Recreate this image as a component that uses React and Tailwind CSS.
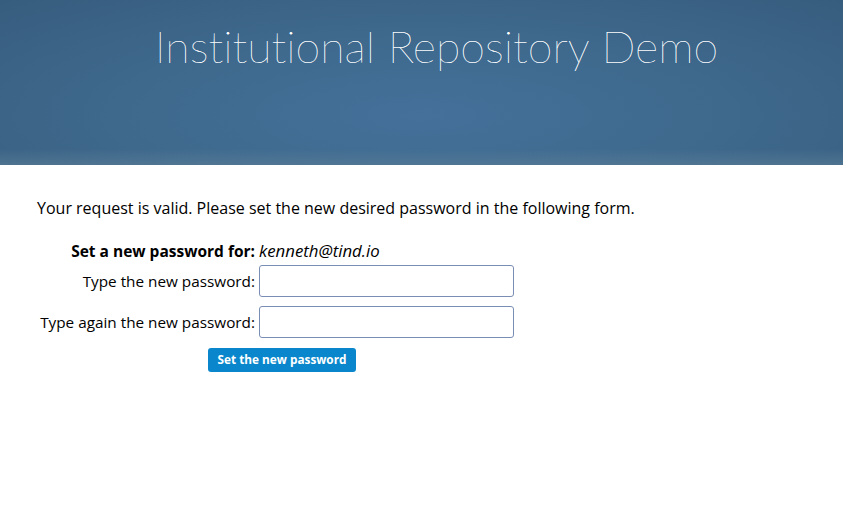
import React from 'react'

const App = () => {
    return (
        <div className="min-h-screen bg-white text-black" style={{ fontFamily: '"Open Sans", "Liberation Sans", sans-serif' }}>
            <header className="h-[165px] bg-[#3d6688] bg-[radial-gradient(ellipse_at_50%_70%,#44709a_0%,#3f6a8e_45%,#375d7e_100%)] relative">
                <div className="absolute inset-x-0 bottom-0 h-[16px] bg-gradient-to-b from-transparent to-[#577a95]/70"></div>
                <h1 className="relative text-center text-white text-[44.8px] font-thin leading-none pt-[24px] pl-[30px] [text-shadow:0_0_0.4px_#fff] [font-variant-ligatures:none]" style={{ fontFamily: 'Lato, "Liberation Sans", sans-serif' }}>
                    Institutional Repository Demo
                </h1>
            </header>
            <main className="px-[37px] pt-[32px] text-[16px]">
                <p className="leading-[22px]">Your request is valid. Please set the new desired password in the following form.</p>
                <div className="mt-[21px] grid grid-cols-[218px_255px] gap-x-[4px] items-center text-[15.3px]">
                    <div className="text-right font-bold leading-[22px] text-[15.5px]">Set a new password for:</div>
                    <div className="italic leading-[22px] text-[16.8px]">kenneth@tind.io</div>
                    <div className="text-right mt-[3px] whitespace-nowrap">Type the new password:</div>
                    <input type="password" className="mt-[3px] h-[32px] w-[255px] border border-[#7a8db5] rounded-[3px] bg-white" />
                    <div className="text-right mt-[9px] whitespace-nowrap">Type again the new password:</div>
                    <input type="password" className="mt-[9px] h-[32px] w-[255px] border border-[#7a8db5] rounded-[3px] bg-white" />
                </div>
                <div className="pl-[171px] mt-[8px]">
                    <button className="h-[24px] w-[148px] bg-[#0a87cc] text-white text-[11.8px] font-bold rounded-[3px] leading-none">
                        Set the new password
                    </button>
                </div>
            </main>
        </div>
    )
}

export default App
